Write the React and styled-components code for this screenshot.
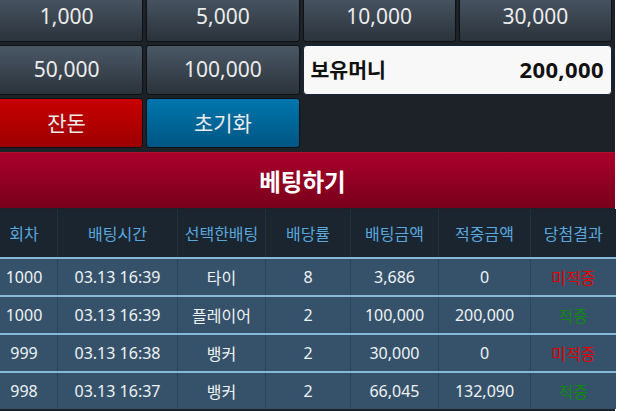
import React from 'react'
import styled, { createGlobalStyle } from 'styled-components'

const GlobalStyle = createGlobalStyle`
  html, body {
    margin: 0;
    padding: 0;
    background: #fff;
    overflow: hidden;
  }
  body {
    font-family: "Noto Sans", "Noto Sans CJK KR", sans-serif;
  }
`

const chips = ['1,000', '5,000', '10,000', '30,000', '50,000', '100,000']

const columns = [
  { key: 'round', label: '회차', width: 67 },
  { key: 'time', label: '배팅시간', width: 120 },
  { key: 'pick', label: '선택한배팅', width: 88 },
  { key: 'odds', label: '배당률', width: 85 },
  { key: 'amount', label: '배팅금액', width: 88 },
  { key: 'win', label: '적중금액', width: 92 },
  { key: 'result', label: '당첨결과', width: 85 },
]

const rows = [
  { round: '1000', time: '03.13 16:39', pick: '타이', odds: '8', amount: '3,686', win: '0', result: '미적중', won: false },
  { round: '1000', time: '03.13 16:39', pick: '플레이어', odds: '2', amount: '100,000', win: '200,000', result: '적중', won: true },
  { round: '999', time: '03.13 16:38', pick: '뱅커', odds: '2', amount: '30,000', win: '0', result: '미적중', won: false },
  { round: '998', time: '03.13 16:37', pick: '뱅커', odds: '2', amount: '66,045', win: '132,090', result: '적중', won: true },
]

const Page = styled.div`
  width: 625px;
  margin: -8px 0 0 -10px;
  background: #1c2228;
  min-height: 430px;
`

const ChipGrid = styled.div`
  display: grid;
  grid-template-columns: repeat(4, 1fr);
  grid-auto-rows: 50px;
  gap: 3px;
  padding-right: 3px;
`

const skins = {
  dark: 'linear-gradient(#4a5866, #2b333b)',
  red: 'linear-gradient(#c80000, #9c0000)',
  blue: 'linear-gradient(#0076ad, #005683)',
}

const Chip = styled.button`
  border: 1px solid #0e1215;
  border-radius: 3px;
  background: ${p => skins[p.$skin || 'dark']};
  color: #ececec;
  font-family: "Noto Sans", "Noto Sans CJK KR", sans-serif;
  font-size: 21px;
  padding: 0 0 2px;
  cursor: pointer;
`

const Wallet = styled.div`
  grid-column: span 2;
  display: flex;
  align-items: center;
  justify-content: space-between;
  background: #f8f8f8;
  border: 1px solid #13263a;
  border-radius: 4px;
  padding: 0 7px 2px 7px;
  font-weight: 700;
  color: #111;
`

const WalletLabel = styled.span`
  font-size: 20.5px;
`

const WalletAmount = styled.span`
  font-size: 22px;
  letter-spacing: 0.4px;
`

const Banner = styled.div`
  margin-top: 4px;
  height: 55px;
  display: flex;
  align-items: center;
  justify-content: center;
  background: linear-gradient(#aa002b, #78001a);
  border-top: 1px solid #b0102e;
  color: #fff;
  font-size: 23.5px;
  font-weight: 700;
`

const Table = styled.table`
  width: 625px;
  table-layout: fixed;
  border-collapse: collapse;
  margin-top: 1px;
`

const HeadCell = styled.th`
  height: 48px;
  padding: 0;
  background: #1b2530;
  color: #5aa8de;
  font-size: 16px;
  font-weight: 400;
  text-align: center;
  border-left: 1px solid #223040;
`

const Row = styled.tr`
  background: #36526a;
  border-top: 2px solid #86b8d8;
`

const Cell = styled.td`
  height: 36px;
  padding: 0;
  text-align: center;
  font-size: 16px;
  color: ${p => (p.$tone === 'won' ? '#0f8a0f' : p.$tone === 'lost' ? '#e80000' : '#eef2f5')};
  border-left: 1px solid #2c4558;
`

export default function App() {
  return (
    <Page>
      <GlobalStyle />
      <ChipGrid>
        {chips.map(c => <Chip key={c}>{c}</Chip>)}
        <Wallet>
          <WalletLabel>보유머니</WalletLabel>
          <WalletAmount>200,000</WalletAmount>
        </Wallet>
        <Chip $skin='red'>잔돈</Chip>
        <Chip $skin='blue'>초기화</Chip>
      </ChipGrid>
      <Banner>베팅하기</Banner>
      <Table>
        <colgroup>
          {columns.map(c => <col key={c.key} style={{ width: c.width }} />)}
        </colgroup>
        <thead>
          <tr>
            {columns.map(c => <HeadCell key={c.key}>{c.label}</HeadCell>)}
          </tr>
        </thead>
        <tbody>
          {rows.map((r, i) => (
            <Row key={i}>
              {columns.map(c => (
                <Cell
                  key={c.key}
                  $tone={c.key === 'result' ? (r.won ? 'won' : 'lost') : undefined}
                >
                  {r[c.key]}
                </Cell>
              ))}
            </Row>
          ))}
        </tbody>
      </Table>
    </Page>
  )
}
